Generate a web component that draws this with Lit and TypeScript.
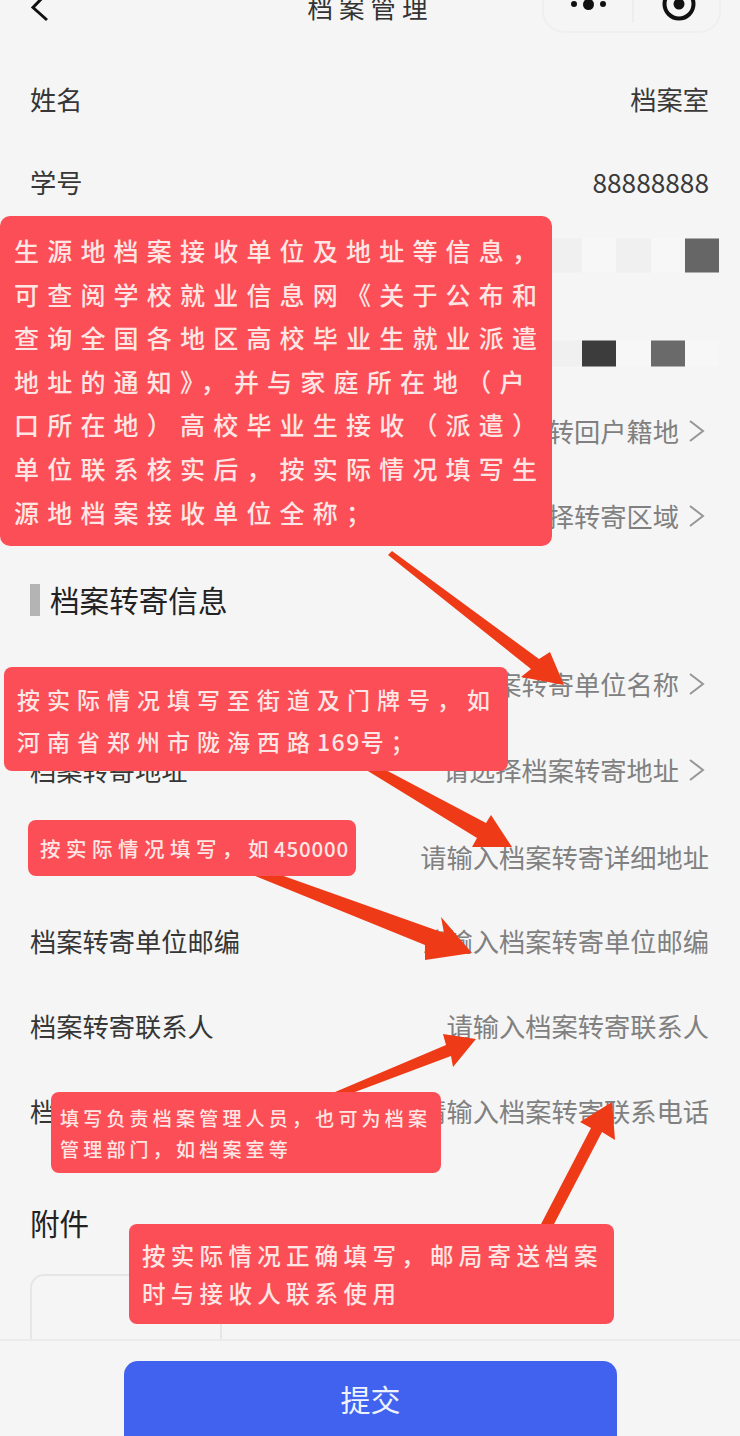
import { LitElement, html, css, svg } from "lit";
import { customElement } from "lit/decorators.js";

type Row = { label: string; value: string; kind?: "filled" | "chevron"; gap?: string };

const topRows: Row[] = [
  { label: "姓名", value: "档案室", kind: "filled" },
  { label: "学号", value: "88888888", kind: "filled" },
];
const transferRows: Row[] = [
  { label: "档案转寄单位名称", value: "请选择档案转寄单位名称", kind: "chevron" },
  { label: "档案转寄地址", value: "请选择档案转寄地址", kind: "chevron", gap: "g2" },
  { label: "档案转寄详细地址", value: "请输入档案转寄详细地址", gap: "g3" },
  { label: "档案转寄单位邮编", value: "请输入档案转寄单位邮编" },
  { label: "档案转寄联系人", value: "请输入档案转寄联系人", gap: "g1" },
  { label: "档案转寄联系电话", value: "请输入档案转寄联系电话", gap: "g1" },
];

const arrows = [
  "392,551 539,659 550,652 564,685 521,677 531,669 388,555",
  "382,768 486,823 491,815 512,847 472,847 477,838 363,768",
  "278,874 444,933 441,917 472,953 425,960 425,945 250,874",
  "347,1095 451,1056 453,1067 476,1039 443,1034 446,1045 328,1095",
  "553,1226 602,1132 615,1140 612,1102 580,1122 591,1128 540,1226",
];

const callouts: { cls: string; lines: string[] }[] = [
  {
    cls: "a",
    lines: [
      "生源地档案接收单位及地址等信息，",
      "可查阅学校就业信息网《关于公布和",
      "查询全国各地区高校毕业生就业派遣",
      "地址的通知》，并与家庭所在地（户",
      "口所在地）高校毕业生接收（派遣）",
      "单位联系核实后，按实际情况填写生",
      "源地档案接收单位全称；",
    ],
  },
  { cls: "b", lines: ["按实际情况填写至街道及门牌号，如", "河南省郑州市陇海西路169号；"] },
  { cls: "c", lines: ["按实际情况填写，如450000"] },
  { cls: "d", lines: ["填写负责档案管理人员，也可为档案", "管理部门，如档案室等"] },
  { cls: "e", lines: ["按实际情况正确填写，邮局寄送档案", "时与接收人联系使用"] },
];

@customElement("app-root")
export class AppRoot extends LitElement {
  static styles = css`
    :host {
      display: block;
      position: relative;
      width: 740px;
      height: 1436px;
      overflow: hidden;
      background: #f5f5f5;
      color: #333;
      font-family: "Noto Sans CJK SC", "Noto Sans", sans-serif;
    }
    .page {
      display: flex;
      flex-direction: column;
      height: 100%;
    }
    .nav {
      flex: none;
      height: 57px;
      overflow: hidden;
      display: flex;
      justify-content: space-between;
      align-items: flex-start;
      padding: 0 19px 0 30px;
      position: relative;
    }
    .back {
      width: 18px;
      height: 24px;
      display: block;
    }
    .title {
      position: absolute;
      left: 1px;
      right: 0;
      top: -12px;
      text-align: center;
      font-size: 25.5px;
      line-height: 38px;
      letter-spacing: 6px;
      color: #333;
    }
    .capsule {
      width: 179px;
      height: 33px;
      box-sizing: border-box;
      border: 2px solid #efefef;
      border-top: 0;
      border-radius: 0 0 22px 22px;
      display: grid;
      grid-template-columns: 90px 1fr;
    }
    .cap-left {
      height: 23px;
      box-sizing: border-box;
      border-right: 2px solid #ededed;
      display: flex;
      justify-content: center;
      align-items: flex-start;
      gap: 6px;
      padding-top: 1px;
    }
    .dot {
      width: 6px;
      height: 6px;
      border-radius: 50%;
      background: #111;
    }
    .dot.big {
      width: 11px;
      height: 11px;
      margin-top: -2.5px;
    }
    .cap-right {
      display: flex;
      justify-content: center;
      padding-left: 4px;
    }
    .target {
      width: 36px;
      height: 22px;
      display: block;
    }
    .content {
      flex: 1;
      min-height: 0;
      overflow: hidden;
      display: flex;
      flex-direction: column;
    }
    .row {
      flex: none;
      height: 84px;
      padding: 0 31px 0 30px;
      display: flex;
      align-items: center;
      justify-content: space-between;
      font-size: 26.25px;
      line-height: 36px;
      color: #363636;
    }
    .row.tight { height: 83px; }
    .row.g1 { margin-top: 1px; }
    .row.g2 { margin-top: 2px; }
    .row.g3 { margin-top: 3px; }
    .value {
      display: flex;
      align-items: center;
      gap: 9px;
      color: #808080;
    }
    .value.filled {
      color: #3a3a3a;
    }
    .chev {
      width: 17px;
      height: 24px;
      margin-right: 4px;
      display: block;
    }
    .mosaic {
      display: flex;
      margin-right: -10px;
    }
    .mosaic.up {
      height: 34px;
      transform: translateY(-9.5px);
    }
    .mosaic.down {
      height: 26px;
      transform: translateY(5.5px);
    }
    .cell {
      width: 34.2px;
      height: 100%;
    }
    .c-1 { background: #f0f0f0; }
    .c-2 { background: #f7f7f7; }
    .c-3 { background: #666; }
    .c-4 { background: #3c3c3c; }
    .c-5 { background: #6a6a6a; }
    .section {
      flex: none;
      height: 84px;
      padding: 0 30px;
      display: flex;
      align-items: center;
      gap: 10px;
      font-size: 29.6px;
      line-height: 40px;
      color: #222;
    }
    .section i {
      width: 10px;
      height: 32px;
      background: #b4b4b4;
    }
    .attach {
      flex: none;
      margin: 46px 30px 0;
      font-size: 29.6px;
      line-height: 48px;
      color: #222;
    }
    .upload {
      flex: none;
      box-sizing: border-box;
      width: 192px;
      height: 192px;
      margin: 27px 30px 0;
      border: 2px solid #e6e6e6;
      border-radius: 14px;
    }
    .footer {
      flex: none;
      height: 97px;
      box-sizing: border-box;
      border-top: 2px solid #ebebeb;
      padding: 20px 123px 0 124px;
      background: #f5f5f5;
    }
    .submit {
      height: 90px;
      border-radius: 14px;
      background: #4062ee;
      color: #eef2ff;
      font-size: 30px;
      line-height: 74px;
      text-align: center;
    }
    .arrows {
      position: absolute;
      left: 0;
      top: 0;
      width: 740px;
      height: 1436px;
      pointer-events: none;
    }
    .arrows polygon {
      fill: #ef3a17;
    }
    .callout {
      position: absolute;
      box-sizing: border-box;
      background: #fb4e57;
      color: #ffe6e4;
      font-weight: 500;
      white-space: nowrap;
      border-radius: 8px;
    }
    .callout div {
      display: block;
    }
    .a {
      left: 0;
      top: 216px;
      width: 552px;
      height: 330px;
      padding: 13px 0 0 14px;
      font-size: 25px;
      letter-spacing: 8.2px;
      line-height: 43.6px;
      border-radius: 10px;
    }
    .b {
      left: 4px;
      top: 667px;
      width: 504px;
      height: 104px;
      padding: 12px 0 0 13px;
      font-size: 23px;
      letter-spacing: 7px;
      line-height: 41.5px;
    }
    .b .num { letter-spacing: 1.5px; }
    .c {
      left: 28px;
      top: 820px;
      width: 328px;
      height: 56px;
      padding: 11px 0 0 12px;
      font-size: 20.5px;
      letter-spacing: 5.5px;
      line-height: 34px;
    }
    .c .num { letter-spacing: 0.8px; }
    .d {
      left: 51px;
      top: 1092px;
      width: 390px;
      height: 81px;
      padding: 10px 0 0 9px;
      font-size: 19px;
      letter-spacing: 4.2px;
      line-height: 31px;
    }
    .e {
      left: 129px;
      top: 1224px;
      width: 485px;
      height: 100px;
      padding: 12px 0 0 13px;
      font-size: 23.5px;
      letter-spacing: 5.3px;
      line-height: 38px;
    }
  `;

  private renderRow(r: Row, extra = "") {
    return html`<div class="row ${extra} ${r.gap ?? ""}">
      <span>${r.label}</span>
      <span class="value ${r.kind === "filled" ? "filled" : ""}">
        ${r.value}
        ${r.kind === "chevron"
          ? html`<svg class="chev" viewBox="0 0 17 24" fill="none">
              <path d="M2 2 L15 12 L2 22" stroke="#969696" stroke-width="2" />
            </svg>`
          : ""}
      </span>
    </div>`;
  }

  private renderLine(line: string) {
    const parts = line.split(/(\d+)/);
    return html`<div>
      ${parts.map((p) => (/^\d+$/.test(p) ? html`<span class="num">${p}</span>` : p))}
    </div>`;
  }

  render() {
    return html`
      <div class="page">
        <div class="nav">
          <svg class="back" viewBox="0 0 18 24" fill="none">
            <path d="M17 -7 L3 7.5 L17 20" stroke="#111" stroke-width="3" />
          </svg>
          <div class="title">档案管理</div>
          <div class="capsule">
            <div class="cap-left">
              <span class="dot"></span><span class="dot big"></span><span class="dot"></span>
            </div>
            <div class="cap-right">
              <svg class="target" viewBox="0 0 36 22" fill="none">
                <circle cx="18" cy="4" r="14.5" stroke="#111" stroke-width="4" />
                <circle cx="18" cy="4" r="5.5" fill="#111" />
              </svg>
            </div>
          </div>
        </div>
        <div class="content">
          ${topRows.map((r) => this.renderRow(r, "tight"))}
          <div class="row tight">
            <span>身份证号</span>
            <div class="mosaic up">
              <span class="cell c-1"></span><span class="cell c-2"></span><span class="cell c-1"></span>
              <span class="cell c-2"></span><span class="cell c-3"></span>
            </div>
          </div>
          <div class="row tight">
            <span>手机号码</span>
            <div class="mosaic down">
              <span class="cell c-1"></span><span class="cell c-4"></span><span class="cell c-2"></span>
              <span class="cell c-5"></span><span class="cell c-2"></span>
            </div>
          </div>
          ${this.renderRow({ label: "是否转回户籍地", value: "请选择是否转回户籍地", kind: "chevron" }, "tight")}
          ${this.renderRow({ label: "转寄区域", value: "请选择转寄区域", kind: "chevron", gap: "g2" })}
          <div class="section"><i></i>档案转寄信息</div>
          ${transferRows.map((r) => this.renderRow(r))}
          <div class="attach">附件</div>
          <div class="upload"></div>
        </div>
        <div class="footer"><div class="submit">提交</div></div>
      </div>
      <svg class="arrows" viewBox="0 0 740 1436">
        ${arrows.map((p) => svg`<polygon points=${p}></polygon>`)}
      </svg>
      ${callouts.map(
        (c) => html`<div class="callout ${c.cls}">${c.lines.map((l) => this.renderLine(l))}</div>`
      )}
    `;
  }
}
